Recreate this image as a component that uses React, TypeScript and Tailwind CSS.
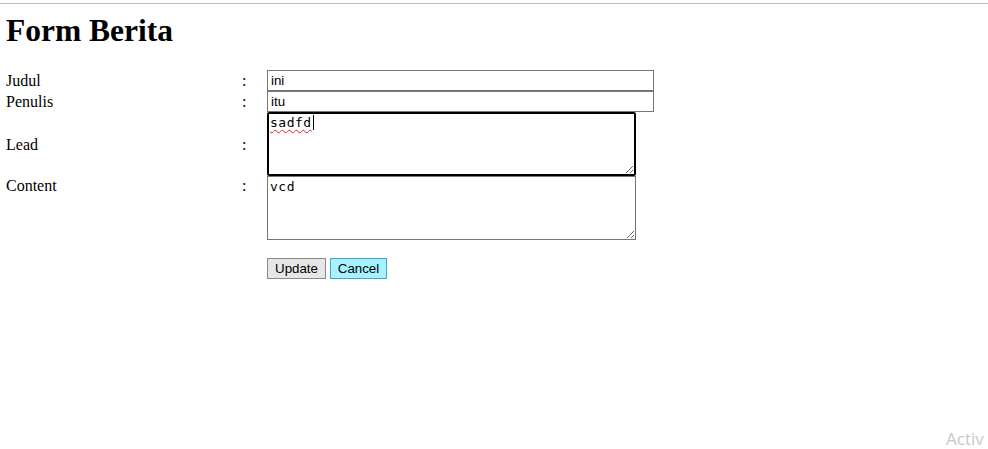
import React from "react";

const labelCls = "w-[236px] shrink-0";
const colonCls = "w-[25px] shrink-0";

const FormRow: React.FC<{
  label: string;
  align?: "center" | "start";
  children: React.ReactNode;
}> = ({ label, align = "center", children }) => (
  <div className={align === "center" ? "flex items-center" : "flex items-start"}>
    <div className={labelCls}>{label}</div>
    <div className={colonCls}>:</div>
    {children}
  </div>
);

export default function App() {
  return (
    <div className="relative h-[449px] overflow-hidden bg-white text-black font-['Liberation_Serif',serif]">
      <div className="mt-[3px] h-px bg-[#bcbcbc]" />

      <h1 className="mt-[8px] px-[6px] text-[31.5px] leading-[37px] font-bold">Form Berita</h1>

      <form className="mt-[21px] px-[6px] text-[16px] leading-[19px]">
        <FormRow label="Judul">
          <input
            type="text"
            defaultValue="ini"
            className="h-[21px] w-[387px] border border-[#767676] px-[3px] text-[13.33px] font-['Liberation_Sans',sans-serif] outline-none"
          />
        </FormRow>
        <FormRow label="Penulis">
          <input
            type="text"
            defaultValue="itu"
            className="h-[21px] w-[387px] border border-[#767676] px-[3px] text-[13.33px] font-['Liberation_Sans',sans-serif] outline-none"
          />
        </FormRow>
        <FormRow label="Lead">
          <div className="relative">
            <textarea
              defaultValue="sadfd"
              className="block h-[64px] w-[369px] rounded-[2px] border-2 border-black px-[1px] py-[1px] text-[13px] leading-[15px] tracking-[0.5px] font-['DejaVu_Sans_Mono',monospace] outline-none"
            />
            {/* spellcheck squiggle + caret */}
            <span className="pointer-events-none absolute left-[3px] top-[3px] border-r border-black pr-px text-[13px] leading-[15px] tracking-[0.5px] font-['DejaVu_Sans_Mono',monospace] text-transparent underline decoration-wavy decoration-[#e02020] decoration-1 underline-offset-2">
              sadfd
            </span>
          </div>
        </FormRow>
        <FormRow label="Content" align="start">
          <textarea
            defaultValue="vcd"
            className="block h-[64px] w-[369px] border border-[#767676] px-[2px] py-[2px] text-[13px] leading-[15px] tracking-[0.5px] font-['DejaVu_Sans_Mono',monospace] outline-none"
          />
        </FormRow>

        <div className="mt-[18px] flex gap-[4px] pl-[261px] font-['Liberation_Sans',sans-serif] text-[13.33px]">
          <button
            type="button"
            className="h-[21px] w-[59px] border border-[#8a8a8a] bg-[#e6e6e6] leading-[19px]"
          >
            Update
          </button>
          <button
            type="button"
            className="h-[21px] w-[57px] border border-[#3fa7c9] bg-[#a6f2ff] leading-[19px]"
          >
            Cancel
          </button>
        </div>
      </form>

      <div className="absolute left-[946px] top-[429px] text-[17px] leading-[20px] text-[#c8c8c8] font-['Open_Sans',sans-serif] whitespace-nowrap">
        Activ
      </div>
    </div>
  );
}
